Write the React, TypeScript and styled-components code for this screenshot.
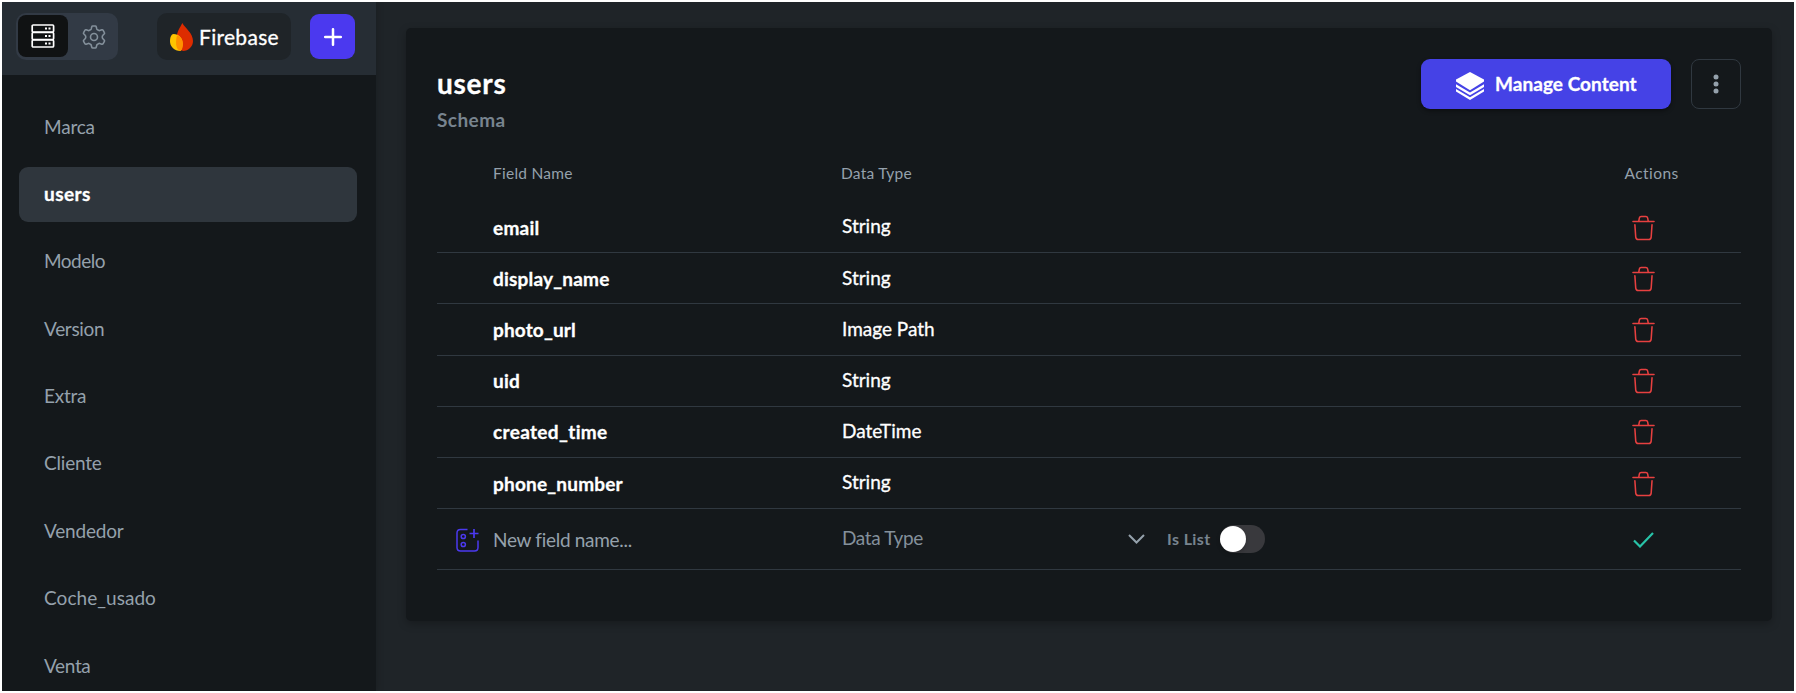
import React from 'react';
import styled, { createGlobalStyle } from 'styled-components';

const Global = createGlobalStyle`
  * { box-sizing: border-box; }
  body {
    margin: 0;
    background: #fff;
    font-family: Lato, "Open Sans", sans-serif;
    font-variant-ligatures: none;
  }
  button { font: inherit; padding: 0; border: 0; background: none; }
  svg { flex: none; }
`;

const Frame = styled.div`
  width: 1796px;
  height: 693px;
  padding: 2px;
  overflow: hidden;
  background: #fff;
`;

const Shell = styled.div`
  display: flex;
  height: 689px;
  overflow: hidden;
  background: #1f2428;
`;

const Sidebar = styled.aside`
  width: 374px;
  flex: none;
  background: #14181b;
  box-shadow: 2px 0 6px rgba(0, 0, 0, 0.15);
`;

const Toolbar = styled.header`
  display: flex;
  align-items: flex-start;
  height: 73px;
  padding: 11px 0 0 14px;
  background: #262d34;
`;

const Segment = styled.div`
  display: flex;
  width: 102px;
  height: 47px;
  padding: 2px;
  border-radius: 10px;
  background: #323a45;
`;

const SegmentButton = styled.button<{ $active?: boolean }>`
  display: flex;
  align-items: center;
  justify-content: center;
  width: ${(p) => (p.$active ? 50 : 48)}px;
  height: 42px;
  margin-top: ${(p) => (p.$active ? 0 : 1)}px;
  padding-left: ${(p) => (p.$active ? 0 : 4)}px;
  border-radius: 8px;
  background: ${(p) => (p.$active ? '#101213' : 'transparent')};
`;

const Provider = styled.div`
  display: flex;
  align-items: center;
  gap: 6px;
  width: 134px;
  height: 47px;
  margin-left: 39px;
  padding-left: 13px;
  border-radius: 10px;
  background: #1f2428;
`;

const AddButton = styled.button`
  display: flex;
  align-items: center;
  justify-content: center;
  width: 45px;
  height: 45px;
  margin: 1px 0 0 19px;
  border-radius: 9px;
  background: #4b39ef;
`;

const Label = styled.span<{
  $size: number;
  $color?: string;
  $weight?: number;
  $spacing?: number;
}>`
  font-size: ${(p) => p.$size}px;
  line-height: 24px;
  font-weight: ${(p) => p.$weight ?? 400};
  color: ${(p) => p.$color ?? '#95a1ac'};
  letter-spacing: ${(p) => p.$spacing ?? 0}px;
  white-space: nowrap;
  -webkit-text-stroke: ${(p) => (p.$color === '#fff' ? 0.3 : 0)}px currentColor;
`;

const Collections = styled.nav`
  display: flex;
  flex-direction: column;
  gap: 12.4px;
  padding: 24.5px 19px 0 17px;
`;

const Collection = styled.a<{ $active?: boolean }>`
  display: flex;
  align-items: center;
  flex: none;
  height: 55px;
  padding: 0 0 1px 25px;
  border-radius: 9px;
  background: ${(p) => (p.$active ? '#2f363d' : 'transparent')};
`;

const Main = styled.main`
  flex: 1;
  padding: 26px 22px 0 30px;
`;

const Card = styled.section`
  height: 593px;
  padding: 31px 31px 0;
  border-radius: 5px;
  background: #14181b;
  box-shadow: 0 3px 8px rgba(0, 0, 0, 0.25);
`;

const CardHeader = styled.div`
  display: flex;
  height: 92px;
`;

const Titles = styled.div`
  display: flex;
  flex: 1;
  flex-direction: column;
  gap: 13px;
  padding-top: 12px;
`;

const ManageButton = styled.button`
  display: flex;
  align-items: center;
  gap: 11px;
  width: 250px;
  height: 50px;
  padding: 0 0 1px 35px;
  border-radius: 9px;
  background: #4542e6;
  box-shadow: 0 2px 4px rgba(0, 0, 0, 0.4);

  svg { margin-top: 4px; }
`;

const MenuButton = styled.button`
  display: flex;
  align-items: center;
  justify-content: center;
  width: 50px;
  height: 50px;
  margin-left: 20px;
  border: 1px solid #303840;
  border-radius: 8px;
`;

const Columns = styled.div`
  display: grid;
  grid-template-columns: 56px 349px 1fr 118px;
  align-items: center;
`;

const HeadRow = styled(Columns)`
  grid-template-columns: 56px 348px 1fr 116.5px;
  height: 51px;
  padding-bottom: 7px;
`;

const Row = styled(Columns)`
  height: 51.2px;
  padding-top: 1px;
  border-bottom: 1px solid #303840;
`;

const NewRow = styled(Row)`
  height: 61px;
`;

const TypeCell = styled.div`
  display: flex;
  align-items: center;
  padding-bottom: 2.5px;
`;

const IconCell = styled.div<{ $left?: number }>`
  display: flex;
  padding-left: ${(p) => p.$left ?? 0}px;
`;

const TypeSelect = styled.div`
  display: flex;
  align-items: center;
  justify-content: space-between;
  width: 303px;
  margin-right: 22px;

  svg { margin-top: 2px; }
`;

const ListOption = styled.div`
  display: flex;
  align-items: center;
  gap: 9px;
  padding-top: 2px;
`;

const Toggle = styled.div`
  display: flex;
  align-items: center;
  width: 45px;
  height: 28px;
  border-radius: 14px;
  background: #39393d;
`;

const Knob = styled.span`
  width: 26px;
  height: 26px;
  border-radius: 50%;
  background: #fff;
  box-shadow: 0 2px 4px rgba(0, 0, 0, 0.2);
`;

const ServerIcon = () => (
  <svg width="24" height="24" viewBox="0 0 24 24" fill="none" stroke="#fff" strokeWidth="1.7">
    {[1, 8.5, 16].map((y) => (
      <g key={y}>
        <rect x="1.2" y={y} width="21.4" height="7" rx="1" />
        <path d={`M14 ${y + 3.5}h2M17.5 ${y + 3.5}h2`} strokeWidth="2" />
      </g>
    ))}
  </svg>
);

const GearIcon = () => (
  <svg width="24" height="24" viewBox="0 0 24 24" fill="none" stroke="#84909b" strokeWidth="1.6" strokeLinejoin="round">
    <path d="M10.600 1h2.800q.6 0 .8.700l.6 2.200q.2.600.8.900l1 .6q.5.300 1.100.1l2.200-.7q.7-.2 1.100.4l1.400 2.400q.4.600-.1 1.200l-1.600 1.700q-.4.400-.4 1v1q0 .6.4 1l1.600 1.700q.5.600.1 1.200l-1.400 2.400q-.4.600-1.100.4l-2.200-.7q-.6-.2-1.100.1l-1 .6q-.6.300-.8.900l-.6 2.200q-.2.700-.8.700h-2.800q-.6 0-.8-.7l-.6-2.200q-.2-.6-.8-.9l-1-.6q-.5-.3-1.100-.1l-2.200.7q-.7.2-1.100-.4l-1.400-2.400q-.4-.6.1-1.200l1.600-1.700q.4-.4.4-1v-1q0-.6-.4-1L1.700 8.800q-.5-.6-.1-1.200L3 5.200q.4-.6 1.100-.4l2.200.7q.6.200 1.100-.1l1-.6q.6-.3.800-.9l.6-2.200q.2-.7.800-.7z" />
    <circle cx="12" cy="12" r="3.5" />
  </svg>
);

const FirebaseIcon = () => (
  <svg width="23" height="28" viewBox="0 0 23 28">
    <path d="M12.300 0C15 5 23 10 23 18c0 5.500-4.500 10-10 10C8 26 6 21 6.500 15 7 8 10 5 12.300 0z" fill="#dd2c00" />
    <path d="M3.500 11C9 11 12.500 15 12.500 20c0 3-.5 6-2 8C4 28 0 23.500 0 18c0-3 1-7 3.500-7z" fill="#ffc400" />
    <path d="M7 12.200c4 1.500 6 5 6 9 0 2.500-.8 5-2 6.700-2-.3-3.600-1.500-4.200-3.400C5.500 21 6 16 7 12.200z" fill="#ff9100" />
  </svg>
);

const PlusIcon = () => (
  <svg width="18" height="18" viewBox="0 0 18 18" stroke="#fff" strokeWidth="2.500" strokeLinecap="round">
    <path d="M9 1.200v15.600M1.200 9h15.600" />
  </svg>
);

const LayersIcon = () => (
  <svg width="28" height="28" viewBox="0 0 28 28" fill="#fff">
    <path d="M14 0 28 7.600V9.600L14 18.200 0 9.600V7.600z" />
    <path d="M0 12.200 14 20.600 28 12.200v2.800L14 23.300 0 15z" />
    <path d="M0 17 14 25.200 28 17v2.500L14 28 0 19.500z" />
  </svg>
);

const DotsIcon = () => (
  <svg width="6" height="20" viewBox="0 0 6 20" fill="#95a1ac">
    <circle cx="3" cy="3" r="2.500" />
    <circle cx="3" cy="10" r="2.500" />
    <circle cx="3" cy="17" r="2.500" />
  </svg>
);

const TrashIcon = () => (
  <svg width="23" height="26" viewBox="0 0 24 26" fill="none" stroke="#e74040" strokeWidth="1.600" strokeLinecap="round">
    <path d="M1 6.200h22M7 6l.7-3.600Q8 1 9.500 1h5q1.500 0 1.800 1.400L17 6M3 9.500l.9 13Q4.200 25 6.500 25h11q2.300 0 2.500-2.500l.9-13" />
  </svg>
);

const AddFieldIcon = () => (
  <svg width="23" height="24" viewBox="0 0 23 24" fill="none" stroke="#4b39ef" strokeWidth="1.500">
    <path d="M11.500 1.500H4.500Q1 1.500 1 5v14.500Q1 23 4.500 23h14Q22 23 22 19.500V12.500" />
    <path d="M18 1v9M13.500 5.500h9" strokeWidth="1.700" />
    <circle cx="7.300" cy="8.500" r="2.100" />
    <circle cx="7.300" cy="16.500" r="2.100" />
  </svg>
);

const ChevronIcon = () => (
  <svg width="17" height="10" viewBox="0 0 17 10" fill="none" stroke="#95a1ac" strokeWidth="2">
    <path d="m1 1 7.500 7.500L16 1" />
  </svg>
);

const CheckIcon = () => (
  <svg width="21" height="16" viewBox="0 0 21 16" fill="none" stroke="#28c3a8" strokeWidth="2.200">
    <path d="m1 8.500 6 6L20 1" />
  </svg>
);

const collections: [string, number][] = [
  ['Marca', -0.2],
  ['users', 0.45],
  ['Modelo', -0.5],
  ['Version', -0.3],
  ['Extra', -0.25],
  ['Cliente', -0.2],
  ['Vendedor', -0.2],
  ['Coche_usado', 0.05],
  ['Venta', -0.35],
];

const fields: [string, string, number][] = [
  ['email', 'String', 0.25],
  ['display_name', 'String', 0.2],
  ['photo_url', 'Image Path', 0.15],
  ['uid', 'String', 0.2],
  ['created_time', 'DateTime', 0.35],
  ['phone_number', 'String', 0.2],
];

export default function App() {
  return (
    <Frame>
      <Global />
      <Shell>
        <Sidebar>
          <Toolbar>
            <Segment>
              <SegmentButton $active><ServerIcon /></SegmentButton>
              <SegmentButton><GearIcon /></SegmentButton>
            </Segment>
            <Provider>
              <FirebaseIcon />
              <Label $size={21} $color="#fff" $spacing={0.3}>Firebase</Label>
            </Provider>
            <AddButton><PlusIcon /></AddButton>
          </Toolbar>
          <Collections>
            {collections.map(([name, spacing]) => {
              const active = name === 'users';
              return (
                <Collection key={name} $active={active}>
                  <Label $size={19} $spacing={spacing} $weight={active ? 700 : 400} $color={active ? '#fff' : undefined}>
                    {name}
                  </Label>
                </Collection>
              );
            })}
          </Collections>
        </Sidebar>
        <Main>
          <Card>
            <CardHeader>
              <Titles>
                <Label $size={28} $weight={700} $color="#fff" $spacing={0.75}>users</Label>
                <Label $size={19} $weight={700} $color="#78848f" $spacing={0.45}>Schema</Label>
              </Titles>
              <ManageButton>
                <LayersIcon />
                <Label $size={19} $weight={700} $color="#fff" $spacing={0.05}>Manage Content</Label>
              </ManageButton>
              <MenuButton><DotsIcon /></MenuButton>
            </CardHeader>
            <HeadRow>
              <span />
              <Label $size={15.5} $spacing={0.25}>Field Name</Label>
              <Label $size={15.5} $spacing={0.25}>Data Type</Label>
              <Label $size={15.5} $spacing={0.45}>Actions</Label>
            </HeadRow>
            {fields.map(([name, type, spacing]) => (
              <Row key={name}>
                <span />
                <Label $size={19} $weight={700} $color="#fff" $spacing={spacing}>{name}</Label>
                <TypeCell><Label $size={19} $color="#fff">{type}</Label></TypeCell>
                <IconCell $left={9}><TrashIcon /></IconCell>
              </Row>
            ))}
            <NewRow>
              <IconCell $left={19}><AddFieldIcon /></IconCell>
              <Label $size={19} $spacing={-0.3}>New field name...</Label>
              <TypeCell>
                <TypeSelect>
                  <Label $size={19} $color="#84909b" $spacing={-0.35}>Data Type</Label>
                  <ChevronIcon />
                </TypeSelect>
                <ListOption>
                  <Label $size={16} $weight={700} $color="#78848f" $spacing={0.4}>Is List</Label>
                  <Toggle><Knob /></Toggle>
                </ListOption>
              </TypeCell>
              <IconCell $left={10}><CheckIcon /></IconCell>
            </NewRow>
          </Card>
        </Main>
      </Shell>
    </Frame>
  );
}
